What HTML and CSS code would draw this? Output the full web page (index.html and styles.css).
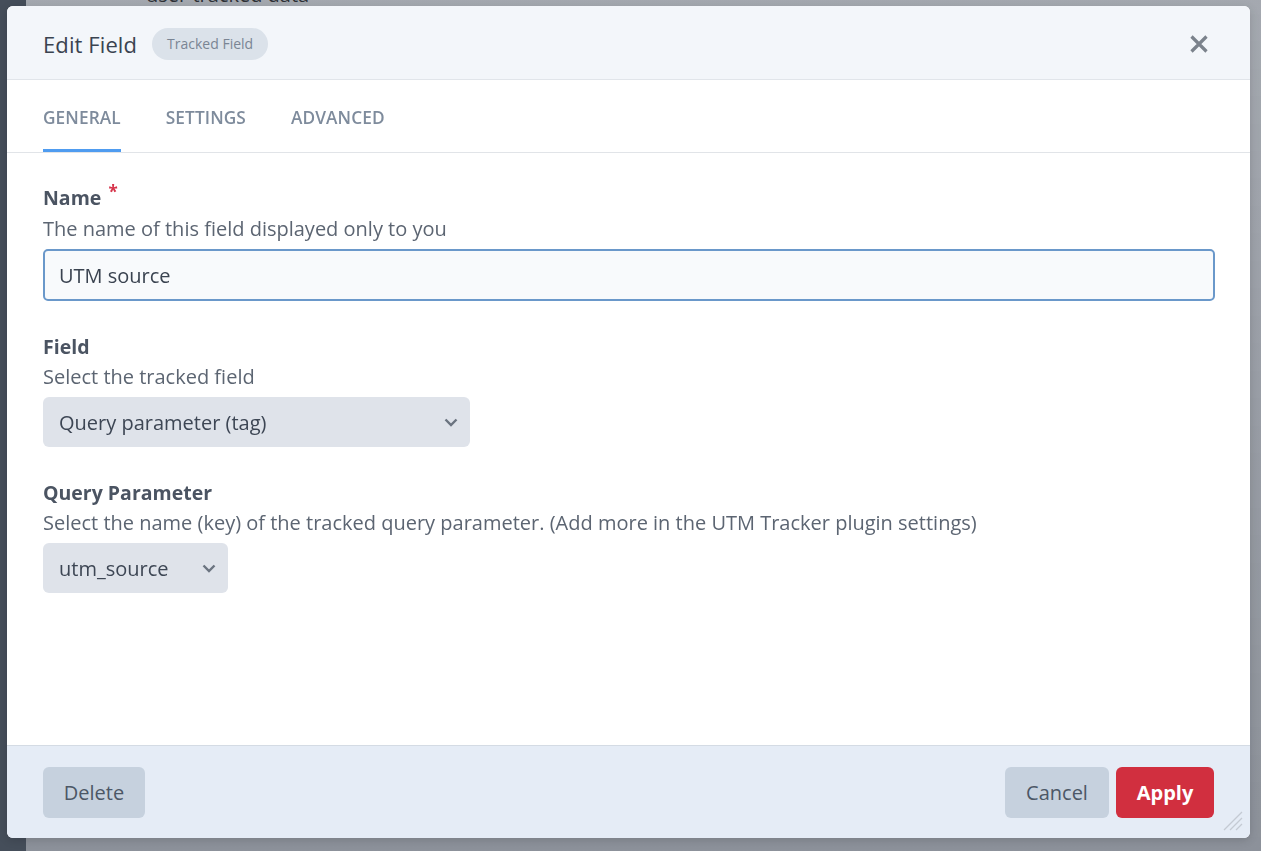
FILE: index.html
```html
<!DOCTYPE html>
<html lang="en">
<head>
<meta charset="utf-8">
<title>Edit Field</title>
<link rel="stylesheet" href="styles.css">
</head>
<body>
<div class="page">
  <aside class="sidebar"></aside>
  <main class="main"><div class="peek">user tracked data</div></main>
</div>
<div class="backdrop"></div>
<div class="modal">
  <header class="modal-head">
    <h1 class="title">Edit Field</h1>
    <span class="badge">Tracked Field</span>
    <button class="close" aria-label="Close">
      <svg width="20" height="20" viewBox="0 0 20 20"><path d="M2.5 2.5 L17.5 17.5 M17.5 2.5 L2.5 17.5" stroke="#7b828c" stroke-width="3.2" stroke-linecap="butt" fill="none"/></svg>
    </button>
  </header>
  <nav class="tabs">
    <a class="tab active">GENERAL</a>
    <a class="tab">SETTINGS</a>
    <a class="tab">ADVANCED</a>
  </nav>
  <section class="body">
    <div class="group">
      <label class="label">Name <span class="req">*</span></label>
      <p class="desc">The name of this field displayed only to you</p>
      <div class="input">UTM source</div>
    </div>
    <div class="group">
      <label class="label">Field</label>
      <p class="desc">Select the tracked field</p>
      <div class="select wide"><span>Query parameter (tag)</span>
        <svg class="chev" width="14" height="9" viewBox="0 0 14 9"><path d="M1.5 1.5 L7 7 L12.5 1.5" stroke="#6b7480" stroke-width="2.4" fill="none"/></svg>
      </div>
    </div>
    <div class="group">
      <label class="label">Query Parameter</label>
      <p class="desc">Select the name (key) of the tracked query parameter. (Add more in the UTM Tracker plugin settings)</p>
      <div class="select narrow"><span>utm_source</span>
        <svg class="chev" width="14" height="9" viewBox="0 0 14 9"><path d="M1.5 1.5 L7 7 L12.5 1.5" stroke="#6b7480" stroke-width="2.4" fill="none"/></svg>
      </div>
    </div>
  </section>
  <footer class="modal-foot">
    <button class="btn btn-gray del">Delete</button>
    <div class="spacer"></div>
    <button class="btn btn-gray cancel">Cancel</button>
    <button class="btn btn-red apply">Apply</button>
    <svg class="grip" width="22" height="22" viewBox="0 0 22 22"><path d="M3 21 L21 3 M9 21 L21 9 M15 21 L21 15" stroke="#c4cad3" stroke-width="1.3" fill="none"/></svg>
  </footer>
</div>
</body>
</html>
```
FILE: styles.css
```css
* { box-sizing: border-box; }
html, body { margin: 0; padding: 0; height: 100%; }
body {
  font-family: "Open Sans", "Noto Sans", sans-serif;
  overflow: hidden;
  background: #fff;
}
.page { display: flex; height: 851px; }
.sidebar { width: 26px; background: #454e5a; flex: none; }
.main { flex: 1; background: #f1f3f6; position: relative; }
.peek { padding: 0 0 0 120px; margin-top: -15px; font-size: 20px; line-height: 20px; color: #333; }
.backdrop {
  position: fixed; left: 26px; top: 0; right: 0; bottom: 0;
  background: linear-gradient(180deg, rgba(40,48,62,0.38) 0%, rgba(40,48,62,0.5) 100%);
}
.modal {
  position: fixed; left: 7px; top: 6px; width: 1243px; height: 832px;
  background: #fff; border-radius: 6px; overflow: hidden;
  display: flex; flex-direction: column;
  box-shadow: 0 2px 10px rgba(0,0,0,0.15);
}
.modal-head {
  height: 74px; flex: none; background: #f3f6fa;
  border-bottom: 1px solid #e1e5ea;
  display: flex; align-items: center; padding: 2px 36px 0 36px;
}
.title { margin: 0; font-size: 22px; font-weight: 400; color: #3a4350; letter-spacing: 0.1px; }
.badge {
  margin-left: 15px; height: 32px; padding: 0 15px; border-radius: 16px;
  background: #dbe2ea; color: #7a8594; font-size: 14px;
  display: inline-flex; align-items: center;
}
.close { margin-left: auto; border: 0; background: none; padding: 0; width: 20px; height: 20px; margin-right: 5px; display: flex; }
.tabs {
  height: 73px; flex: none; display: flex; gap: 45px; padding: 0 36px;
  border-bottom: 1px solid #e1e4e8;
}
.tab {
  font-size: 17.25px; font-weight: 600; color: #7e8b9c; letter-spacing: 0.1px;
  display: flex; align-items: center; padding-top: 6px;
  border-bottom: 3px solid transparent;
}
.tab.active { border-bottom-color: #4f9cf0; }
.body { flex: 1; padding: 31px 35px 0 36px; display: flex; flex-direction: column; gap: 32px; }
.group { display: flex; flex-direction: column; }
.label { font-size: 19.5px; font-weight: 700; color: #4b5462; line-height: 28px; }
.req { color: #d6334a; font-size: 17px; position: relative; top: -7px; margin-left: 2px; }
.desc { margin: 2px 0 6px; font-size: 20px; color: #5c6572; line-height: 28px; }
.input {
  height: 52px; border: 2px solid #6a98ca; border-radius: 5px; background: #f8fafc;
  display: flex; align-items: center; padding: 0 14px; font-size: 20px; color: #3a4350;
}
.select {
  height: 50px; border-radius: 6px; background: #dfe3ea; display: flex; align-items: center;
  padding: 0 12px 0 16px; font-size: 20px; color: #3d4654;
}
.select span { flex: 1; }
.select.wide { width: 427px; }
.select.narrow { width: 185px; }
.chev { flex: none; margin-top: 1px; }
.modal-foot {
  height: 93px; flex: none; background: #e5ecf6; border-top: 1px solid #d4dbe4;
  display: flex; align-items: center; padding: 0 36px 0 36px; gap: 7px; position: relative;
}
.spacer { flex: 1; }
.btn {
  height: 51px; border: 0; border-radius: 6px; font-family: inherit; font-size: 20px;
  padding: 0; margin-top: 0;
}
.btn-gray { background: #c6d1de; color: #4c5766; }
.btn-red { background: #d12f3f; color: #fff; font-weight: 700; }
.del { width: 102px; }
.cancel { width: 104px; }
.apply { width: 98px; }
.grip { position: absolute; right: 7px; bottom: 7px; }
```
